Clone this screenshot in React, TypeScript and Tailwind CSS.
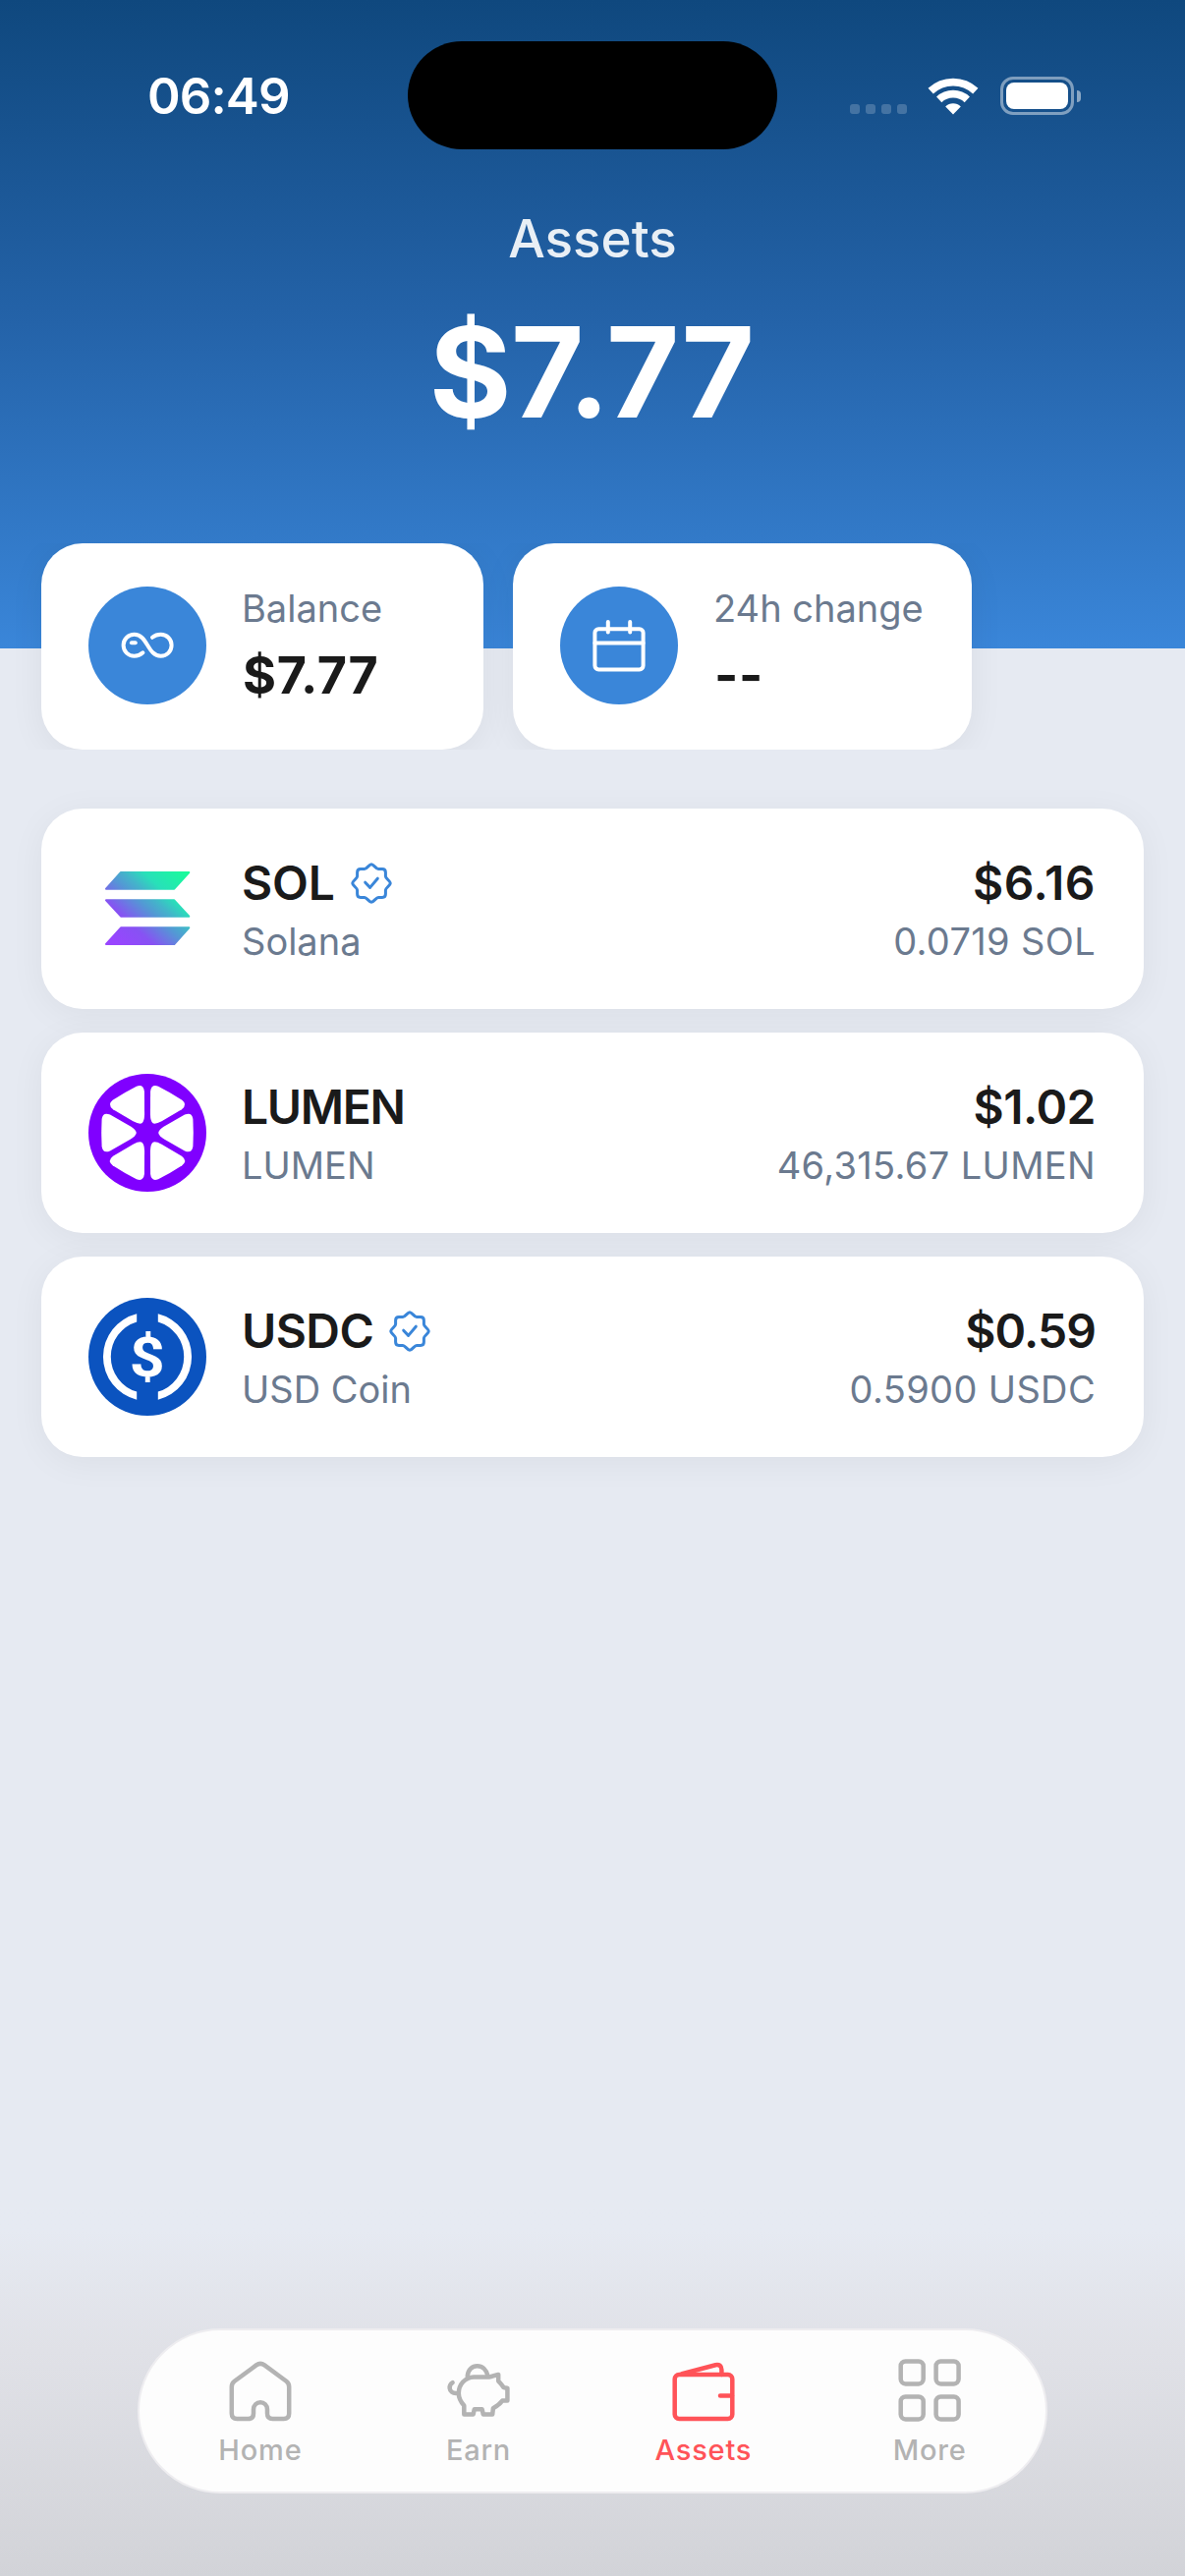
import type { ReactNode } from "react";

type Asset = {
  symbol: string;
  name: string;
  value: string;
  amount: string;
  symbolTracking: string;
  valueTracking: string;
  verified?: boolean;
  logo: ReactNode;
};

const SolanaLogo = () => (
  <svg viewBox="0 0 120 120" className="size-[120px]">
    <defs>
      <linearGradient id="sol" gradientUnits="userSpaceOnUse" x1="22" y1="102" x2="98" y2="18">
        <stop offset="0.08" stopColor="#9945ff" />
        <stop offset="0.3" stopColor="#8752f3" />
        <stop offset="0.5" stopColor="#5497d5" />
        <stop offset="0.6" stopColor="#43b4ca" />
        <stop offset="0.72" stopColor="#28e0b9" />
        <stop offset="0.97" stopColor="#19fb9b" />
      </linearGradient>
    </defs>
    <g fill="url(#sol)" stroke="url(#sol)" strokeWidth="2" strokeLinejoin="round">
      <path d="M33 23H102.3L87.3 39.7H18Z" />
      <path d="M18 51.3H87.3L102.3 67.7H33Z" />
      <path d="M33 79.3H102.3L87.3 96H18Z" />
    </g>
  </svg>
);

const LumenLogo = () => (
  <svg viewBox="0 0 120 120" className="size-[120px]">
    <circle cx="60" cy="60" r="60" fill="#8000ff" />
    {[0, 60, 120, 180, 240, 300].map((angle) => (
      <path
        key={angle}
        transform={`rotate(${angle} 60 60)`}
        d="M71.2 60Q71.5 57 77.5 53.3L98 41.6Q105.3 38.6 106.4 46Q107.2 60 106.4 74Q105.3 81.4 98 78.4L77.5 66.7Q71.5 63 71.2 60Z"
        fill="#fff"
      />
    ))}
  </svg>
);

const UsdcLogo = () => (
  <svg viewBox="0 0 120 120" className="size-[120px]">
    <circle cx="60" cy="60" r="60" fill="#0b53bf" />
    <path d="M49.2 16.3A45 45 0 0 0 49.2 103.7V95.6A37.2 37.2 0 0 1 49.2 24.4Z" fill="#fff" />
    <path d="M70.8 16.3A45 45 0 0 1 70.8 103.7V95.6A37.2 37.2 0 0 0 70.8 24.4Z" fill="#fff" />
    <text
      transform="translate(59.8 79.5) scale(1.14 1)"
      textAnchor="middle"
      fill="#fff"
      className="font-[Roboto,sans-serif] text-[55px] font-bold"
    >
      $
    </text>
  </svg>
);

const VerifiedIcon = () => (
  <svg viewBox="-21 -21 42 42" className="size-[42px]" fill="none" stroke="#3a86d9" strokeWidth="3" strokeLinecap="round" strokeLinejoin="round">
    <path d="M0 -19.3C2.2 -19.3 4.8 -14.4 7 -14.4H11Q14.4 -14.4 14.4 -11V-7C14.4 -4.8 19.3 -2.2 19.3 0C19.3 2.2 14.4 4.8 14.4 7V11Q14.4 14.4 11 14.4H7C4.8 14.4 2.2 19.3 0 19.3C-2.2 19.3 -4.8 14.4 -7 14.4H-11Q-14.4 14.4 -14.4 11V7C-14.4 4.8 -19.3 2.2 -19.3 0C-19.3 -2.2 -14.4 -4.8 -14.4 -7V-11Q-14.4 -14.4 -11 -14.4H-7C-4.8 -14.4 -2.2 -19.3 0 -19.3Z" />
    <path d="M-6.3 -0.8L-1.4 4.4L6.3 -4.8" />
  </svg>
);

const InfinityIcon = () => (
  <svg viewBox="0 0 120 120" className="size-[120px]" fill="none" stroke="#fff" strokeWidth="4" strokeLinecap="round">
    <path d="M55.4 67.3C53 69.5 50 70.7 46.7 70.7C40.5 70.7 35.6 66 35.6 59.8C35.6 53.6 40.5 48.8 46.7 48.8C60.3 48.8 60 70.7 73.6 70.7C79.8 70.7 84.6 66 84.6 59.8C84.6 53.6 79.8 48.8 73.6 48.8C70.3 48.8 67.5 49.8 65 51.8" />
    <path d="M43.9 57.2H47.8" />
  </svg>
);

const CalendarIcon = () => (
  <svg viewBox="0 0 120 120" className="size-[120px]" fill="none" stroke="#fff" strokeWidth="4" strokeLinecap="round">
    <rect x="35.4" y="43.2" width="49.2" height="41.2" rx="3.8" />
    <path d="M35.4 57.4H84.6M48.8 36V46.6M71.2 36V46.6" />
  </svg>
);

const navIcon = {
  viewBox: "0 0 72 72",
  className: "size-[72px]",
  fill: "none",
  stroke: "currentColor",
  strokeWidth: 4.5,
  strokeLinecap: "round",
  strokeLinejoin: "round",
} as const;

const HomeIcon = () => (
  <svg {...navIcon}>
    <path d="M6.8 31.5Q6.8 28 9.6 25.8L31.8 9.4Q36 6.4 40.2 9.4L62.4 25.8Q65.2 28 65.2 31.5V58.5Q65.2 64 59.7 64H48.5Q43 64 43 58.5V54.2A7 7 0 0 0 29 54.2V58.5Q29 64 23.5 64H12.3Q6.8 64 6.8 58.5Z" />
  </svg>
);

const EarnIcon = () => (
  <svg {...navIcon}>
    <path d="M31.2 21.4H46.8C50 21.2 52.5 19.6 56.2 19V25.5C58.2 27.8 60 29.6 61.5 32C63 32.6 64.3 32.4 65.4 32.8V45.6H60.2C57.5 49.2 54.3 51.4 50.9 53.3L50.2 59.6H40.8L39.6 54.2H31.8L30.6 59.6H21.3V50.6C17.6 46.4 15.8 42.8 15.8 38C15.8 29 22.2 21.8 31.2 21.4Z" />
    <path d="M24.8 21V20C25.4 14 29.6 10.2 34.7 10.2C39.9 10.2 44 14 45.4 20" />
    <path d="M9.6 27.2C7.3 28.6 6.4 30.4 6.7 33C7.1 36.2 9.7 38.2 13.4 38" />
  </svg>
);

const WalletIcon = () => (
  <svg {...navIcon}>
    <rect x="6.7" y="19" width="58.6" height="45" rx="4.5" />
    <path d="M14 18.2L48.2 9.2Q54.2 8.2 54.4 14V19M53 40.5H65" />
  </svg>
);

const MoreIcon = () => (
  <svg {...navIcon}>
    <rect x="6.7" y="5.4" width="23" height="23" rx="4.8" />
    <rect x="42.6" y="5.4" width="23" height="23" rx="4.8" />
    <rect x="6.7" y="41.4" width="23" height="23" rx="4.8" />
    <rect x="42.6" y="41.4" width="23" height="23" rx="4.8" />
  </svg>
);

const StatusBar = () => (
  <div className="grid grid-cols-[415px_376px_1fr] pt-[42px]">
    <div className="flex h-[112px] items-center pl-[150px] text-[51px] font-semibold tracking-[-0.9px] text-white">06:49</div>
    <div className="h-[110px] rounded-full bg-black" />
    <div className="flex h-[111px] items-center pl-[74px]">
      <div className="mt-[27px] flex gap-[6px]">
        {[0, 1, 2, 3].map((dot) => (
          <span key={dot} className="size-[10px] rounded-[3px] bg-white/20" />
        ))}
      </div>
      <svg viewBox="0 0 52 38" className="ml-[21px] h-[38px] w-[52px]" fill="none" stroke="#fff" strokeWidth="7.7">
        <path d="M3.2 13.6A33.2 33.2 0 0 1 48.8 13.6" />
        <path d="M11.7 22.4A20.8 20.8 0 0 1 40.3 22.4" />
        <path d="M26 37.6L18.2 29.4A11.3 11.3 0 0 1 33.8 29.4Z" fill="#fff" stroke="none" />
      </svg>
      <div className="ml-[22px] h-[39px] w-[75px] rounded-[13px] border-[3px] border-white/45 p-[3px]">
        <div className="h-full rounded-[8px] bg-white" />
      </div>
      <div className="ml-[3px] h-[12px] w-[4px] rounded-r-full bg-white/50" />
    </div>
  </div>
);

const StatCard = ({ icon, label, value, width }: { icon: ReactNode; label: string; value: string; width: string }) => (
  <div className={`flex h-[210px] shrink-0 rounded-[42px] bg-white pl-12 pt-9 shadow-[0_6px_36px_rgba(0,0,0,0.06)] ${width}`}>
    <div className="mt-2 size-[120px] rounded-full bg-[#3a86d9]">{icon}</div>
    <div className="ml-9 whitespace-nowrap">
      <div className="text-[38px] leading-[60px] text-[#6b7a8f]">{label}</div>
      <div className="mt-[3px] pl-px text-[52px] leading-[72px] font-bold tracking-[0.6px] text-[#1a1a1a]">{value}</div>
    </div>
  </div>
);

const AssetRow = ({ symbol, name, value, amount, symbolTracking, valueTracking, verified, logo }: Asset) => (
  <div className="flex h-[204px] items-center rounded-[42px] bg-white pr-[49px] pl-12 shadow-[0_6px_36px_rgba(0,0,0,0.05)]">
    {logo}
    <div className="ml-9 flex-1 pt-1">
      <div className="flex items-center gap-4">
        <span className={`text-[48px] leading-[60px] font-semibold text-[#1a1a1a] ${symbolTracking}`}>{symbol}</span>
        {verified && <VerifiedIcon />}
      </div>
      <div className="mt-0.5 text-[38px] leading-[54px] text-[#6b7a8f]">{name}</div>
    </div>
    <div className="pt-1 text-right">
      <div className={`text-[48px] leading-[60px] font-semibold text-[#1a1a1a] ${valueTracking}`}>{value}</div>
      <div className="mt-0.5 text-[38px] leading-[54px] tracking-[0.35px] text-[#6b7a8f]">{amount}</div>
    </div>
  </div>
);

const assets: Asset[] = [
  {
    symbol: "SOL",
    name: "Solana",
    value: "$6.16",
    amount: "0.0719 SOL",
    symbolTracking: "tracking-[-0.2px]",
    valueTracking: "tracking-[0.5px]",
    verified: true,
    logo: <SolanaLogo />,
  },
  {
    symbol: "LUMEN",
    name: "LUMEN",
    value: "$1.02",
    amount: "46,315.67 LUMEN",
    symbolTracking: "tracking-[-1.3px]",
    valueTracking: "tracking-[-0.5px]",
    logo: <LumenLogo />,
  },
  {
    symbol: "USDC",
    name: "USD Coin",
    value: "$0.59",
    amount: "0.5900 USDC",
    symbolTracking: "tracking-[-0.6px]",
    valueTracking: "tracking-[-0.9px]",
    verified: true,
    logo: <UsdcLogo />,
  },
];

const tabs = [
  { label: "Home", icon: <HomeIcon />, active: false },
  { label: "Earn", icon: <EarnIcon />, active: false },
  { label: "Assets", icon: <WalletIcon />, active: true },
  { label: "More", icon: <MoreIcon />, active: false },
];

const TabBar = () => (
  <nav className="mx-auto flex h-[168px] w-[926px] justify-center gap-[143.5px] rounded-full border-2 border-[#eeedf0] bg-[#fdfdfd] pt-[26px]">
    {tabs.map((tab) => (
      <div key={tab.label} className={`flex flex-col items-center ${tab.active ? "text-[#ff5358]" : "text-[#b3b3b3]"}`}>
        {tab.icon}
        <span className="mt-[6px] text-[29px] leading-[36px] font-medium tracking-[0.8px]">{tab.label}</span>
      </div>
    ))}
  </nav>
);

const App = () => {
  return (
    <div className="flex h-[2622px] w-[1206px] flex-col overflow-hidden bg-[#e6eaf2] font-[Inter,sans-serif]">
      <header className="h-[660px] shrink-0 bg-linear-to-b from-[#0f487e] via-[#2463a9] via-50% to-[#3a86d9]">
        <StatusBar />
        <h1 className="mt-[53px] text-center text-[53px] leading-[72px] font-medium text-white/90">Assets</h1>
        <div className="mt-[28px] pr-[2px] text-center text-[128px] leading-[144px] font-bold tracking-[-0.5px] text-white">$7.77</div>
      </header>

      <section className="relative -mt-[107px] flex h-[210px] shrink-0 gap-[30px] overflow-hidden pl-[42px]">
        <StatCard icon={<InfinityIcon />} label="Balance" value="$7.77" width="w-[450px]" />
        <StatCard icon={<CalendarIcon />} label="24h change" value="--" width="w-[467px]" />
      </section>

      <main className="mt-[60px] flex flex-col gap-6 px-[42px]">
        {assets.map((asset) => (
          <AssetRow key={asset.symbol} {...asset} />
        ))}
      </main>

      <footer className="mt-auto h-[382px] bg-linear-to-b from-[#e6eaf2] from-8% via-[#e0e1e7] via-40% to-[#d2d3d8] pt-[130px]">
        <TabBar />
      </footer>
    </div>
  );
};

export default App;
